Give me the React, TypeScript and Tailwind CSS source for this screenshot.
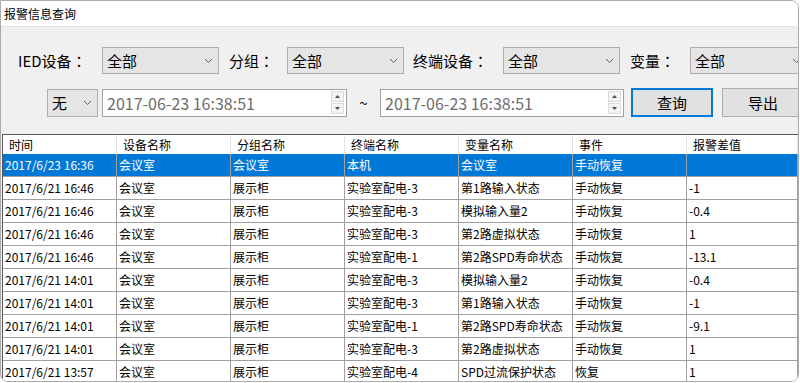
import React from "react";

function Chevron() {
  return (
    <svg width="9" height="6" viewBox="0 0 9 6" className="shrink-0">
      <path d="M1 1 L4.5 4.5 L8 1" fill="none" stroke="#606060" strokeWidth="1" />
    </svg>
  );
}

function Combo({ text, className }: { text: string; className: string }) {
  return (
    <div
      className={
        "flex items-center h-[27px] border border-[#adadad] bg-[#e5e5e5] pl-[4px] pr-[5px] shrink-0 " +
        className
      }
    >
      <span className="flex-1 text-[15px] leading-none text-black">{text}</span>
      <Chevron />
    </div>
  );
}

function Label({ text, className }: { text: string; className: string }) {
  return (
    <span className={"text-[15px] leading-none text-black shrink-0 whitespace-nowrap " + className}>
      {text}
      <span className="font-['Noto_Sans_CJK_JP',sans-serif]">：</span>
    </span>
  );
}

function Spin() {
  return (
    <div className="flex flex-col gap-[1px] shrink-0">
      <div className="w-[13px] h-[11px] border border-[#dadada] bg-[#f4f4f4] flex items-center justify-center">
        <svg width="5" height="3" viewBox="0 0 5 3">
          <path d="M0 3 L2.5 0 L5 3 Z" fill="#505050" />
        </svg>
      </div>
      <div className="w-[13px] h-[11px] border border-[#dadada] bg-[#f4f4f4] flex items-center justify-center">
        <svg width="5" height="3" viewBox="0 0 5 3">
          <path d="M0 0 L2.5 3 L5 0 Z" fill="#505050" />
        </svg>
      </div>
    </div>
  );
}

function DateInput({ className }: { className: string }) {
  return (
    <div
      className={
        "flex items-center h-[28px] border border-[#a0a0a0] bg-white pl-[4px] pr-[2px] shrink-0 " +
        className
      }
    >
      <span className="flex-1 text-[16px] leading-none text-[#6d6d6d]">2017-06-23 16:38:51</span>
      <Spin />
    </div>
  );
}

const headers = ["时间", "设备名称", "分组名称", "终端名称", "变量名称", "事件", "报警差值"];

const rows: string[][] = [
  ["2017/6/23 16:36", "会议室", "会议室", "本机", "会议室", "手动恢复", ""],
  ["2017/6/21 16:46", "会议室", "展示柜", "实验室配电-3", "第1路输入状态", "手动恢复", "-1"],
  ["2017/6/21 16:46", "会议室", "展示柜", "实验室配电-3", "模拟输入量2", "手动恢复", "-0.4"],
  ["2017/6/21 16:46", "会议室", "展示柜", "实验室配电-3", "第2路虚拟状态", "手动恢复", "1"],
  ["2017/6/21 16:46", "会议室", "展示柜", "实验室配电-1", "第2路SPD寿命状态", "手动恢复", "-13.1"],
  ["2017/6/21 14:01", "会议室", "展示柜", "实验室配电-3", "模拟输入量2", "手动恢复", "-0.4"],
  ["2017/6/21 14:01", "会议室", "展示柜", "实验室配电-3", "第1路输入状态", "手动恢复", "-1"],
  ["2017/6/21 14:01", "会议室", "展示柜", "实验室配电-1", "第2路SPD寿命状态", "手动恢复", "-9.1"],
  ["2017/6/21 14:01", "会议室", "展示柜", "实验室配电-3", "第2路虚拟状态", "手动恢复", "1"],
  ["2017/6/21 13:57", "会议室", "展示柜", "实验室配电-4", "SPD过流保护状态", "恢复", "1"],
];

export default function App() {
  return (
    <div className="w-[800px] h-[383px] bg-white overflow-hidden font-['Noto_Sans_CJK_SC','Noto_Sans',sans-serif]">
      <div className="w-[799px] h-[382px] border border-[#ababab] rounded-tr-[8px] rounded-b-[8px] overflow-hidden flex flex-col bg-[#f0f0f0]">
        {/* title bar */}
        <div className="h-[26px] shrink-0 bg-white border-b border-[#e3e3e3] flex items-center pl-[3px]">
          <span className="text-[12px] leading-none text-black">报警信息查询</span>
        </div>

        {/* filter row 1 */}
        <div className="mt-[20px] h-[27px] flex items-center shrink-0 pl-[17px]">
          <Label text="IED设备" className="w-[84px]" />
          <Combo text="全部" className="w-[117px]" />
          <Label text="分组" className="ml-[10px] w-[58px]" />
          <Combo text="全部" className="w-[117px]" />
          <Label text="终端设备" className="ml-[9px] w-[90px]" />
          <Combo text="全部" className="w-[117px]" />
          <Label text="变量" className="ml-[10px] w-[60px]" />
          <Combo text="全部" className="w-[117px]" />
        </div>

        {/* filter row 2 */}
        <div className="mt-[14px] h-[29px] flex items-center shrink-0 pl-[46px]">
          <Combo text="无" className="w-[51px] h-[28px]" />
          <DateInput className="ml-[4px] w-[245px]" />
          <span className="w-[33px] text-center text-[15px] leading-none text-black shrink-0">~</span>
          <DateInput className="w-[244px]" />
          <button className="ml-[7px] w-[82px] h-[29px] shrink-0 border-2 border-[#0078d7] bg-[#e1e1e1] text-[15px] leading-none text-black">
            查询
          </button>
          <button className="ml-[9px] w-[82px] h-[29px] shrink-0 border border-[#adadad] bg-[#e1e1e1] text-[15px] leading-none text-black">
            导出
          </button>
        </div>

        {/* table */}
        <div className="mt-[17px] ml-[1px] flex-1 min-h-0 overflow-hidden border-t border-l border-[#5a5a5a] bg-white">
          <div className="grid grid-cols-[114px_114px_114px_114px_114px_114px_1fr]">
            {headers.map((h) => (
              <div
                key={h}
                className="h-[19px] flex items-center pl-[6px] border-r border-[#e5e5e5] text-[12px] leading-none text-black"
              >
                {h}
              </div>
            ))}
            {rows.map((r, ri) =>
              r.map((c, ci) => (
                <div
                  key={ri + "-" + ci}
                  className={
                    "h-[23px] flex items-center pl-[2px] border-r border-b border-[#a0a0a0] text-[12px] leading-none whitespace-nowrap overflow-hidden " +
                    (ri === 0 ? "bg-[#0078d7] text-white" : "bg-white text-black")
                  }
                >
                  {c}
                </div>
              ))
            )}
          </div>
        </div>
      </div>
    </div>
  );
}
